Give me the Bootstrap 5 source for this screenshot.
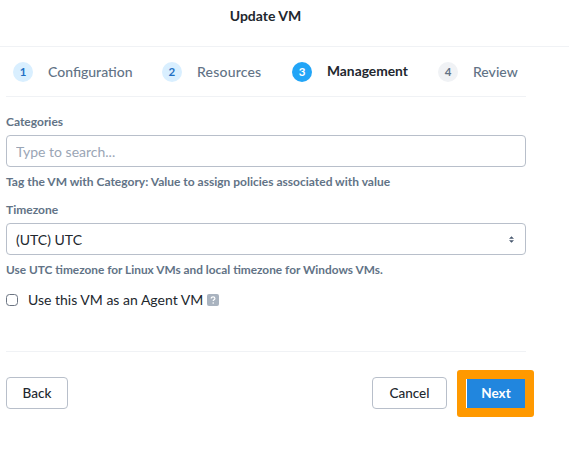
<!DOCTYPE html>
<html lang="en">
<head>
<meta charset="utf-8">
<title>Update VM</title>
<link href="https://cdn.jsdelivr.net/npm/bootstrap@5.3.0/dist/css/bootstrap.min.css" rel="stylesheet">
<style>
html{overflow:hidden}
html,body{background:#fff;font-family:Lato,"Liberation Sans",sans-serif;color:#22272e}
.vm-head{height:47px;border-bottom:1px solid #f0f2f5;font-size:14px;font-weight:700;padding-top:5px;color:#22272e}
.vm-title{width:531px;text-align:center}
.vm-body{width:520px;margin-left:6px}
.vm-steps{height:50px;border-bottom:1px solid #f0f2f5;padding-left:7px;font-size:14px;color:#627386;font-weight:500}
.vm-step{display:flex;align-items:center}
.vm-w1{width:149px}
.vm-w2{width:130px;letter-spacing:.2px}
.vm-w3{width:146px}
.vm-num{width:20px;height:20px;border-radius:50%;background:#d9efff;color:#1f6fc4;font-size:11.5px;font-weight:700;display:flex;align-items:center;justify-content:center;margin-right:15px}
.vm-num.on{background:#22a5f7;color:#fff}
.vm-num.off{background:#f0f2f5;color:#627386}
.vm-step.cur{color:#22272e;font-weight:700;font-size:13.8px}
.vm-label{font-size:12px;font-weight:700;color:#627386;line-height:14px;margin-bottom:6px}
.vm-first{margin-top:18px}
.vm-second{margin-top:14px}
.vm-input,.vm-input:focus{height:32px;border:1px solid #b8bfca;border-radius:4px;padding:0 9px;font-size:14px;box-shadow:none;color:#22272e}
.vm-input::placeholder{color:#9aa5b5;opacity:1}
.form-select.vm-input{background-image:url("data:image/svg+xml,%3Csvg xmlns='http://www.w3.org/2000/svg' viewBox='0 0 6 8'%3E%3Cpath d='M3 0 6 3H0zM3 8 0 5h6z' fill='%234a5a70'/%3E%3C/svg%3E");background-size:5px 7px;background-position:right 11px center}
.vm-help{font-size:12px;font-weight:700;color:#627386;line-height:14px;margin-top:8px}
.vm-help-tight{font-size:11.85px}
.vm-agent{margin-top:14px;font-size:14px;line-height:18px}
.vm-check{width:12px;height:12px;margin:0 10px 0 0;border:1px solid #6b7482;border-radius:3px}
.vm-rule{border-top:1px solid #f0f2f5;margin-top:42px}
.vm-actions{margin-top:18px}
.vm-btn{height:32px;background:#fff;border:1px solid #b8bfca;border-radius:4px;font-size:13.5px;font-weight:500;color:#22272e;padding:0;display:flex;align-items:center;justify-content:center;margin-bottom:1px}
.vm-back{width:62px}
.vm-cancel{width:75px;margin-right:10px}
.vm-ring{background:#ff9900;border-radius:3px;padding:9px;margin-right:-8px}
.vm-next{width:59px;height:29px;background:#2186de;border:0;border-left:1px solid #fff;border-radius:0;color:#fff;font-size:13.5px;font-weight:700;padding:0}
.vm-q{width:12px;height:12px;display:block;margin-left:4px}
</style>
</head>
<body>
<div class="vm-head"><div class="vm-title">Update VM</div></div>
<div class="vm-body">
  <div class="vm-steps d-flex align-items-center">
    <div class="vm-step vm-w1"><span class="vm-num">1</span>Configuration</div>
    <div class="vm-step vm-w2"><span class="vm-num">2</span>Resources</div>
    <div class="vm-step vm-w3 cur"><span class="vm-num on">3</span>Management</div>
    <div class="vm-step"><span class="vm-num off">4</span>Review</div>
  </div>
  <form>
    <div class="vm-label vm-first"><label for="cats">Categories</label></div>
    <input id="cats" class="form-control vm-input" type="text" placeholder="Type to search...">
    <div class="vm-help">Tag the VM with Category: Value to assign policies associated with value</div>
    <div class="vm-label vm-second"><label for="tz">Timezone</label></div>
    <select id="tz" class="form-select vm-input"><option>(UTC) UTC</option></select>
    <div class="vm-help vm-help-tight">Use UTC timezone for Linux VMs and local timezone for Windows VMs.</div>
    <div class="d-flex align-items-center vm-agent">
      <input id="agent" class="form-check-input vm-check" type="checkbox">
      <label for="agent">Use this VM as an Agent VM</label>
      <svg class="vm-q" viewBox="0 0 12 12"><rect width="12" height="12" rx="2" fill="#a9b3bf"/><path d="M4.2 4.6c0-1.1.8-1.8 1.9-1.8s1.8.7 1.8 1.6c0 1.3-1.7 1.4-1.7 2.6" fill="none" stroke="#fff" stroke-width="1.2"/><circle cx="6.2" cy="9" r=".8" fill="#fff"/></svg>
    </div>
    <div class="vm-rule"></div>
    <div class="d-flex justify-content-between align-items-center vm-actions">
      <button type="button" class="btn vm-btn vm-back">Back</button>
      <div class="d-flex align-items-center">
        <button type="button" class="btn vm-btn vm-cancel">Cancel</button>
        <div class="vm-ring"><button type="button" class="btn vm-next d-block">Next</button></div>
      </div>
    </div>
  </form>
</div>
<script src="https://cdn.jsdelivr.net/npm/bootstrap@5.3.0/dist/js/bootstrap.bundle.min.js"></script>
</body>
</html>
